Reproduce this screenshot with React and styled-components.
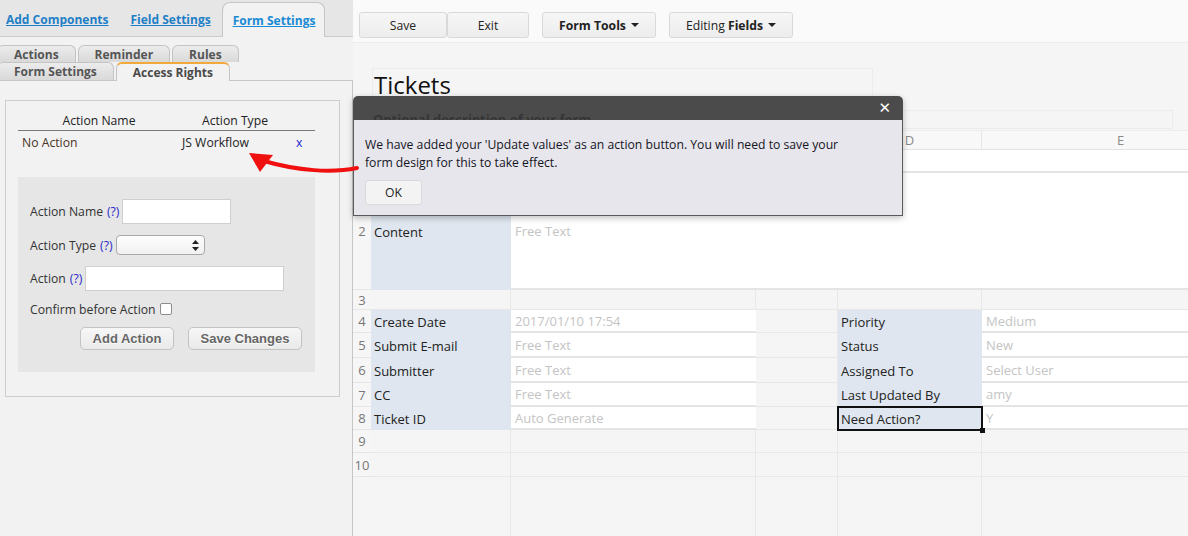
import React from 'react'
import styled, { createGlobalStyle, css } from 'styled-components'

const GlobalStyle = createGlobalStyle`
  html, body {
    margin: 0;
    padding: 0;
    background: #f5f5f5;
    font-family: "Open Sans", "Liberation Sans", sans-serif;
  }
  * { box-sizing: border-box; }
`

const Page = styled.div`
  position: relative;
  display: flex;
  width: 1188px;
  height: 536px;
  overflow: hidden;
  font-size: 12.2px;
  color: #222;
`

/* ---------- left settings panel ---------- */

const LeftPanel = styled.div`
  width: 353px;
  flex-shrink: 0;
  display: flex;
  flex-direction: column;
  background: #f2f2f2;
`

const TopBar = styled.div`
  height: 37px;
  display: flex;
  align-items: flex-end;
  background: #e6e6e6;
  border-bottom: 1px solid #cbcbcb;
`

const TopTab = styled.a`
  height: 34px;
  display: flex;
  align-items: center;
  padding: 0 11px;
  font-weight: 700;
  font-size: 12px;
  color: #1f7fc6;
  text-decoration: underline;
  white-space: nowrap;
  &:first-child { padding-left: 6px; }
  ${p => p.$active && css`
    background: #f2f2f2;
    border: 1px solid #c6c6c6;
    border-bottom: none;
    border-radius: 8px 8px 0 0;
    margin-bottom: -1px;
    height: 35px;
    padding: 0 9px 0 10px;
    color: #1a8ad4;
  `}
`

const SubTabs = styled.div`
  padding-top: 8px;
`

const SubTabRow = styled.div`
  display: flex;
  gap: 2px;
  margin-left: -3px;
  height: ${p => p.$h}px;
`

const SubTab = styled.div`
  display: flex;
  align-items: center;
  padding: 0 16px;
  font-weight: 700;
  font-size: 12px;
  color: #555;
  white-space: nowrap;
  background: linear-gradient(#ececec, #d9d9d9);
  border: 1px solid #c4c4c4;
  border-bottom: none;
  border-radius: 6px 6px 0 0;
  ${p => p.$active && css`
    position: relative;
    z-index: 1;
    margin-bottom: -1px;
    height: 19px;
    background: #f2f2f2;
    border-top: 2px solid #f2a93b;
    color: #4a4a4a;
  `}
`

const TabPane = styled.div`
  flex: 1;
  border-top: 1px solid #c6c6c6;
  border-right: 1px solid #c6c6c6;
`

const ActionBox = styled.div`
  margin: 19px 12px 0 5px;
  height: 297px;
  border: 1px solid #cdcdcd;
  padding: 9px 24px 0 12px;
`

const TableRow = styled.div`
  display: grid;
  grid-template-columns: 162px 110px 25px;
  height: ${p => p.$h}px;
  align-items: center;
  ${p => p.$head && css`
    border-bottom: 1px solid #7a7a7a;
    text-align: center;
    color: #222;
  `}
`

const TableCell = styled.div`
  padding-left: ${p => p.$pad || 0}px;
  color: ${p => p.$color || 'inherit'};
  white-space: nowrap;
`

const FormBox = styled.div`
  margin-top: 24px;
  background: #e6e6e6;
  padding: 22px 13px 22px 12px;
`

const FieldRow = styled.div`
  display: flex;
  align-items: center;
  height: ${p => p.$h}px;
  margin-bottom: ${p => p.$mb || 0}px;
  color: #333;
  white-space: nowrap;
`

const Help = styled.span`
  color: #2a2acc;
  margin: 0 3px 0 4px;
`

const TextInput = styled.div`
  width: ${p => p.$w}px;
  height: 25px;
  background: #fff;
  border: 1px solid #cfcfcf;
`

const SelectBox = styled.div`
  width: 89px;
  height: 20px;
  display: flex;
  align-items: center;
  justify-content: flex-end;
  padding-right: 5px;
  background: linear-gradient(#fdfdfd, #f1f1f1);
  border: 1px solid #a9a9a9;
  border-radius: 4px;
`

const Checkbox = styled.span`
  width: 12px;
  height: 12px;
  margin-left: 4px;
  background: #fff;
  border: 1px solid #8c8c8c;
  border-radius: 2px;
`

const ButtonRow = styled.div`
  display: flex;
  justify-content: flex-end;
  gap: 14px;
`

const PanelButton = styled.button`
  width: ${p => p.$w}px;
  height: 23px;
  padding: 0;
  font-family: "Liberation Sans", Arial, sans-serif;
  font-weight: 700;
  font-size: 13px;
  color: #666;
  text-shadow: 0 1px 0 #fff;
  background: linear-gradient(#f7f7f7, #e9e9e9);
  border: 1px solid #c3c3c3;
  border-radius: 5px;
`

/* ---------- main form designer ---------- */

const Main = styled.div`
  flex: 1;
  min-width: 0;
  display: flex;
  flex-direction: column;
  background: #f5f5f5;
`

const Toolbar = styled.div`
  height: 43px;
  flex-shrink: 0;
  display: flex;
  align-items: flex-start;
  padding: 12px 0 0 6px;
  background: #fafafa;
  border-bottom: 1px solid #ececec;
`

const ToolGroup = styled.div`
  display: flex;
  margin-right: 13px;
`

const ToolButton = styled.div`
  width: ${p => p.$w}px;
  height: 26px;
  display: flex;
  align-items: center;
  justify-content: center;
  gap: 5px;
  color: #222;
  background: linear-gradient(#f6f6f6, #ededed);
  border: 1px solid #d9d9d9;
  border-radius: 3px;
  b { font-weight: 700; }
`

const Caret = styled.span`
  width: 0;
  height: 0;
  border-left: 4px solid transparent;
  border-right: 4px solid transparent;
  border-top: 4px solid #222;
`

const Canvas = styled.div`
  flex: 1;
  display: flex;
  flex-direction: column;
  padding-top: 25px;
  font-size: 13px;
`

const TitleBox = styled.div`
  margin-left: 19px;
  width: 501px;
  height: 33px;
  padding-left: 1px;
  border: 1px solid #ececec;
  font-size: 24px;
  line-height: 31px;
  color: #111;
`

const DescBox = styled.div`
  margin: 9px 0 0 19px;
  width: 801px;
  height: 19px;
  border: 1px solid #ececec;
  font-weight: 700;
  font-size: 13px;
  line-height: 16px;
  color: #7a7a7a;
`

const Sheet = styled.div`
  flex: 1;
  margin-top: 1px;
  display: flex;
  flex-direction: column;
`

const SheetRow = styled.div`
  display: grid;
  grid-template-columns: 18px 140px 245px 82px 144px 278px;
  height: ${p => (p.$h ? `${p.$h}px` : 'auto')};
  flex: ${p => (p.$grow ? 1 : 'none')};
`

const cellKinds = {
  head: css`
    background: #f8f8f8;
    border-top: 1px solid #ececec;
    border-bottom: 2px solid #e2e2e2;
    border-right: 1px solid #e6e6e6;
    justify-content: center;
    color: #8a8a8a;
  `,
  num: css`
    background: #f6f6f6;
    border-bottom: 1px solid #e6e6e6;
    justify-content: center;
    color: #777;
  `,
  label: css`
    background: #dfe6ef;
    padding-left: 3px;
    color: #222;
  `,
  value: css`
    background: #fff;
    border-bottom: 2px solid #e4e4e4;
    padding-left: 4px;
    color: #c4c4c4;
  `,
  empty: css`
    background: #f5f5f5;
    border-bottom: 1px solid #e8e8e8;
    border-right: 1px solid #e8e8e8;
  `,
  filler: css`
    background: #f5f5f5;
    border-right: 1px solid #e8e8e8;
    &:first-child { border-right: none; }
  `,
}

const Cell = styled.div`
  display: flex;
  align-items: center;
  white-space: nowrap;
  overflow: visible;
  grid-column: span ${p => p.$span || 1};
  ${p => cellKinds[p.$kind]}
  ${p => p.$selected && css`
    position: relative;
    z-index: 1;
    outline: 2px solid #111;
    outline-offset: -1px;
    &::after {
      content: '';
      position: absolute;
      right: -3px;
      bottom: -3px;
      width: 5px;
      height: 5px;
      background: #111;
    }
  `}
`

/* ---------- popup + arrow ---------- */

const Dialog = styled.div`
  position: absolute;
  left: 353px;
  top: 96px;
  width: 550px;
  z-index: 10;
  box-shadow: 0 2px 6px rgba(0, 0, 0, 0.25);
  border-radius: 5px 5px 0 0;
`

const DialogHead = styled.div`
  height: 24px;
  display: flex;
  justify-content: flex-end;
  align-items: center;
  padding-right: 12px;
  background: rgba(38, 38, 38, 0.82);
  border-radius: 5px 5px 0 0;
  color: #fff;
  font-family: "DejaVu Sans", sans-serif;
  font-weight: 700;
  font-size: 15px;
`

const DialogBody = styled.div`
  height: 96px;
  padding: 16px 11px 0 11px;
  background: #e7e6ec;
  border: 1px solid #5a5a5a;
  border-top: none;
  line-height: 18px;
  color: #15151f;
`

const OkButton = styled.div`
  width: 57px;
  height: 25px;
  margin-top: 8px;
  display: flex;
  align-items: center;
  justify-content: center;
  background: #f3f3f3;
  border: 1px solid #dadada;
  border-radius: 3px;
  color: #222;
`

const ArrowLayer = styled.svg`
  position: absolute;
  left: 0;
  top: 0;
  z-index: 11;
  pointer-events: none;
`

const rows = [
  { n: 1, h: 23, cells: [{ kind: 'label' }, { kind: 'value', span: 4 }] },
  { n: 2, h: 117, cells: [{ kind: 'label', text: 'Content' }, { kind: 'value', text: 'Free Text', span: 4 }] },
  { n: 3, h: 20 },
  { n: 4, h: 23, cells: [{ kind: 'label', text: 'Create Date' }, { kind: 'value', text: '2017/01/10 17:54' }, { kind: 'empty' }, { kind: 'label', text: 'Priority' }, { kind: 'value', text: 'Medium' }] },
  { n: 5, h: 25, cells: [{ kind: 'label', text: 'Submit E-mail' }, { kind: 'value', text: 'Free Text' }, { kind: 'empty' }, { kind: 'label', text: 'Status' }, { kind: 'value', text: 'New' }] },
  { n: 6, h: 25, cells: [{ kind: 'label', text: 'Submitter' }, { kind: 'value', text: 'Free Text' }, { kind: 'empty' }, { kind: 'label', text: 'Assigned To' }, { kind: 'value', text: 'Select User' }] },
  { n: 7, h: 24, cells: [{ kind: 'label', text: 'CC' }, { kind: 'value', text: 'Free Text' }, { kind: 'empty' }, { kind: 'label', text: 'Last Updated By' }, { kind: 'value', text: 'amy' }] },
  { n: 8, h: 23, cells: [{ kind: 'label', text: 'Ticket ID' }, { kind: 'value', text: 'Auto Generate' }, { kind: 'empty' }, { kind: 'label', text: 'Need Action?', selected: true }, { kind: 'value', text: 'Y' }] },
  { n: 9, h: 23 },
  { n: 10, h: 24 },
]

const emptyCells = [0, 1, 2, 3, 4].map(() => ({ kind: 'empty' }))

const SelectArrows = () => (
  <svg width="7" height="11" viewBox="0 0 7 11">
    <path d="M3.5 0 L7 4 L0 4 Z M0 7 L7 7 L3.5 11 Z" fill="#222" />
  </svg>
)

const App = () => {
  return (
    <Page>
      <GlobalStyle />
      <LeftPanel>
        <TopBar>
          <TopTab>Add Components</TopTab>
          <TopTab>Field Settings</TopTab>
          <TopTab $active>Form Settings</TopTab>
        </TopBar>
        <SubTabs>
          <SubTabRow $h={17}>
            <SubTab>Actions</SubTab>
            <SubTab>Reminder</SubTab>
            <SubTab>Rules</SubTab>
          </SubTabRow>
          <SubTabRow $h={18}>
            <SubTab>Form Settings</SubTab>
            <SubTab $active>Access Rights</SubTab>
          </SubTabRow>
        </SubTabs>
        <TabPane>
          <ActionBox>
            <TableRow $head $h={21}>
              <TableCell>Action Name</TableCell>
              <TableCell>Action Type</TableCell>
              <TableCell />
            </TableRow>
            <TableRow $h={22}>
              <TableCell $pad={4} $color="#4a3426">No Action</TableCell>
              <TableCell $pad={2}>JS Workflow</TableCell>
              <TableCell $pad={6} $color="#2222cc">x</TableCell>
            </TableRow>
            <FormBox>
              <FieldRow $h={25} $mb={11}>
                Action Name<Help>(?)</Help>
                <TextInput $w={109} />
              </FieldRow>
              <FieldRow $h={20} $mb={11}>
                Action Type<Help>(?)</Help>
                <SelectBox><SelectArrows /></SelectBox>
              </FieldRow>
              <FieldRow $h={25} $mb={9}>
                Action<Help>(?)</Help>
                <TextInput $w={199} />
              </FieldRow>
              <FieldRow $h={18} $mb={9}>
                Confirm before Action<Checkbox />
              </FieldRow>
              <ButtonRow>
                <PanelButton $w={94}>Add Action</PanelButton>
                <PanelButton $w={114}>Save Changes</PanelButton>
              </ButtonRow>
            </FormBox>
          </ActionBox>
        </TabPane>
      </LeftPanel>

      <Main>
        <Toolbar>
          <ToolGroup>
            <ToolButton $w={88}>Save</ToolButton>
            <ToolButton $w={82}>Exit</ToolButton>
          </ToolGroup>
          <ToolGroup>
            <ToolButton $w={114}><b>Form Tools</b><Caret /></ToolButton>
          </ToolGroup>
          <ToolGroup>
            <ToolButton $w={124}><span>Editing <b>Fields</b></span><Caret /></ToolButton>
          </ToolGroup>
        </Toolbar>
        <Canvas>
          <TitleBox>Tickets</TitleBox>
          <DescBox>Optional description of your form</DescBox>
          <Sheet>
            <SheetRow $h={20}>
              {['', 'A', 'B', 'C', 'D', 'E'].map((c, i) => (
                <Cell key={i} $kind="head">{c}</Cell>
              ))}
            </SheetRow>
            {rows.map(row => (
              <SheetRow key={row.n} $h={row.h}>
                <Cell $kind="num">{row.n}</Cell>
                {(row.cells || emptyCells).map((c, i) => (
                  <Cell key={i} $kind={c.kind} $span={c.span} $selected={c.selected}>
                    {c.text}
                  </Cell>
                ))}
              </SheetRow>
            ))}
            <SheetRow $grow>
              {[0, 1, 2, 3, 4, 5].map(i => <Cell key={i} $kind="filler" />)}
            </SheetRow>
          </Sheet>
        </Canvas>
      </Main>

      <Dialog>
        <DialogHead>✕</DialogHead>
        <DialogBody>
          We have added your 'Update values' as an action button. You will need to save your
          <br />
          form design for this to take effect.
          <OkButton>OK</OkButton>
        </DialogBody>
      </Dialog>

      <ArrowLayer width="1188" height="536" viewBox="0 0 1188 536">
        <path d="M357 168 C 332 173, 298 171, 264 161" fill="none" stroke="#f01010" strokeWidth="4" strokeLinecap="round" />
        <polygon points="249,153 273,155 260,172" fill="#f01010" />
      </ArrowLayer>
    </Page>
  )
}

export default App
